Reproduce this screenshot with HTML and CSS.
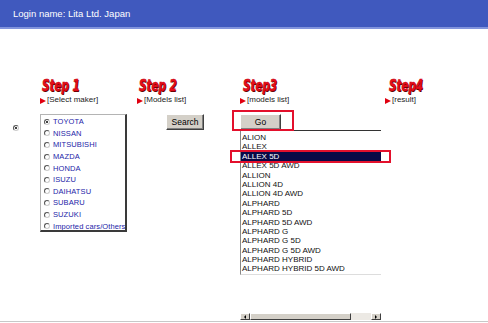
FILE: index.html
```html
<!DOCTYPE html>
<html lang="en">
<head>
  <meta charset="UTF-8" />
  <title>Search by maker</title>
  <link rel="stylesheet" href="styles.css">
</head>
<body>
  <div class="header">
    <span class="login">Login name: Lita Ltd. Japan</span>
  </div>

  <div class="main">
    <div></div>
    <div class="step">
      <div class="step-title"><span>Step 1</span></div>
      <div class="step-sub"><span class="arrow"></span>[Select maker]</div>
    </div>
    <div class="step">
      <div class="step-title"><span>Step 2</span></div>
      <div class="step-sub"><span class="arrow"></span>[Models list]</div>
    </div>
    <div class="step step3">
      <div class="step-title"><span>Step3</span></div>
      <div class="step-sub"><span class="arrow"></span>[models list]</div>
    </div>
    <div class="step step4">
      <div class="step-title"><span>Step4</span></div>
      <div class="step-sub"><span class="arrow"></span>[result]</div>
    </div>

    <div class="col-radio"><span class="radio checked"></span></div>

    <div class="makers">
      <div class="maker"><span class="radio checked"></span>TOYOTA</div>
      <div class="maker"><span class="radio"></span>NISSAN</div>
      <div class="maker"><span class="radio"></span>MITSUBISHI</div>
      <div class="maker"><span class="radio"></span>MAZDA</div>
      <div class="maker"><span class="radio"></span>HONDA</div>
      <div class="maker"><span class="radio"></span>ISUZU</div>
      <div class="maker"><span class="radio"></span>DAIHATSU</div>
      <div class="maker"><span class="radio"></span>SUBARU</div>
      <div class="maker"><span class="radio"></span>SUZUKI</div>
      <div class="maker"><span class="radio"></span>Imported cars/Others</div>
    </div>

    <div class="col-search"><button class="btn search">Search</button></div>

    <div class="col-models">
      <div class="go-wrap"><button class="btn go">Go</button></div>
      <div class="models">
        <div class="model">ALION</div>
        <div class="model">ALLEX</div>
        <div class="model selected">ALLEX 5D</div>
        <div class="model">ALLEX 5D AWD</div>
        <div class="model">ALLION</div>
        <div class="model">ALLION 4D</div>
        <div class="model">ALLION 4D AWD</div>
        <div class="model">ALPHARD</div>
        <div class="model">ALPHARD 5D</div>
        <div class="model">ALPHARD 5D AWD</div>
        <div class="model">ALPHARD G</div>
        <div class="model">ALPHARD G 5D</div>
        <div class="model">ALPHARD G 5D AWD</div>
        <div class="model">ALPHARD HYBRID</div>
        <div class="model">ALPHARD HYBRID 5D AWD</div>
      </div>
      <div class="hscroll">
        <span class="sb-btn"><span class="tri-left"></span></span>
        <span class="sb-thumb"></span>
        <span class="sb-track"></span>
        <span class="sb-btn"><span class="tri-right"></span></span>
      </div>
    </div>
    <div></div>
  </div>

  <div class="bottom-line"></div>
</body>
</html>
```

FILE: styles.css
```css
body {
  margin: 0;
  background: #fff;
  font-family: "Liberation Sans", Arial, sans-serif;
  color: #000;
}

.header {
  height: 27px;
  background: #4059be;
  border-bottom: 2px solid #8294dc;
  padding-left: 13px;
}
.login {
  display: block;
  color: #fff;
  font-size: 9.5px;
  line-height: 27px;
}

.main {
  display: grid;
  grid-template-columns: 40px 97px 103px 145px 1fr;
  margin-top: 48px;
  row-gap: 10px;
}

/* step headings */
.step-title {
  height: 17px;
  padding-left: 2px;
}
.step-title span {
  display: inline-block;
  font-family: "DejaVu Sans Condensed", "DejaVu Sans", sans-serif;
  font-weight: bold;
  font-style: italic;
  font-size: 16px;
  line-height: 17px;
  color: #e8101a;
  -webkit-text-stroke: 0.6px #c80010;
  text-shadow: 1px 1px 0 #4a0000;
  transform: scaleX(0.72);
  transform-origin: left center;
}
.step3 .step-title { padding-left: 3px; }
.step4 .step-title { padding-left: 4px; }
.step-sub {
  display: flex;
  align-items: flex-end;
  margin-top: 2px;
  font-size: 8px;
  line-height: 8px;
  height: 8px;
  color: #222;
}
.arrow {
  width: 0;
  height: 0;
  border-top: 3.5px solid transparent;
  border-bottom: 3.5px solid transparent;
  border-left: 6px solid #e00010;
  margin-right: 1px;
}

/* radios */
.radio {
  display: inline-block;
  width: 4px;
  height: 4px;
  border: 1px solid;
  border-color: #555 #ccc #ccc #555;
  border-radius: 50%;
  position: relative;
  flex: none;
}
.radio.checked::after {
  content: "";
  position: absolute;
  left: 1px;
  top: 1px;
  width: 2px;
  height: 2px;
  border-radius: 50%;
  background: #000;
}
.col-radio { padding: 3px 0 0 13px; }

/* maker list */
.makers {
  width: 87px;
  box-sizing: border-box;
  height: 118px;
  border-top: 1px solid #b4b4b4;
  border-left: 1px solid #b4b4b4;
  border-right: 2px solid #3a3a3a;
  border-bottom: 2px solid #3a3a3a;
  padding: 1px 0 0 3px;
  overflow: hidden;
}
.maker {
  display: flex;
  align-items: center;
  gap: 3px;
  height: 11.6px;
  font-size: 7.5px;
  letter-spacing: 0.1px;
  color: #2424a8;
  white-space: nowrap;
}

/* buttons */
.btn {
  display: block;
  margin: 0;
  padding: 0;
  background: #d4d0c8;
  border: 1px solid;
  border-color: #fff #404040 #404040 #fff;
  box-shadow: inset -1px -1px 0 #808080;
  font-family: "Liberation Sans", Arial, sans-serif;
  color: #000;
  cursor: pointer;
}
.search {
  margin-left: 29px;
  width: 38px;
  height: 16px;
  font-size: 8.5px;
}

/* model list */
.col-models { width: 141px; }
.go-wrap { position: relative; height: 16px; }
.go-wrap::after {
  content: "";
  position: absolute;
  left: -8px;
  top: -4px;
  width: 62px;
  height: 21px;
  border: 2px solid #e3102c;
  box-sizing: border-box;
}
.go {
  width: 41px;
  height: 16px;
  font-size: 8.5px;
}
.models {
  border-top: 1px solid #333;
  border-left: 1px solid #888;
  border-bottom: 1px solid #ddd;
  padding: 2px 0 0;
  height: 145px;
  box-sizing: border-box;
}
.model {
  height: 9.4px;
  line-height: 9.4px;
  font-size: 8px;
  padding-left: 1px;
  color: #111;
  white-space: nowrap;
  position: relative;
}
.model.selected {
  background: #0a0a46;
  color: #fff;
}
.model.selected::after {
  content: "";
  position: absolute;
  left: -11px;
  top: -2px;
  width: 161px;
  height: 13px;
  border: 2px solid #e3102c;
  box-sizing: border-box;
}

/* horizontal scrollbar */
.hscroll {
  display: flex;
  height: 7px;
  margin-top: 38px;
  background: #ece9e4;
}
.sb-btn {
  width: 10px;
  box-sizing: border-box;
  background: #d4d0c8;
  border: 1px solid;
  border-color: #fff #404040 #404040 #fff;
  display: flex;
  align-items: center;
  justify-content: center;
}
.sb-thumb {
  width: 101px;
  box-sizing: border-box;
  background: #d4d0c8;
  border: 1px solid;
  border-color: #fff #404040 #404040 #fff;
}
.sb-track { flex: 1; }
.tri-left, .tri-right {
  width: 0;
  height: 0;
  border-top: 2px solid transparent;
  border-bottom: 2px solid transparent;
}
.tri-left { border-right: 2px solid #000; }
.tri-right { border-left: 2px solid #000; }

.bottom-line {
  margin-top: 1px;
  border-top: 1px solid #c8c8c8;
}
```
